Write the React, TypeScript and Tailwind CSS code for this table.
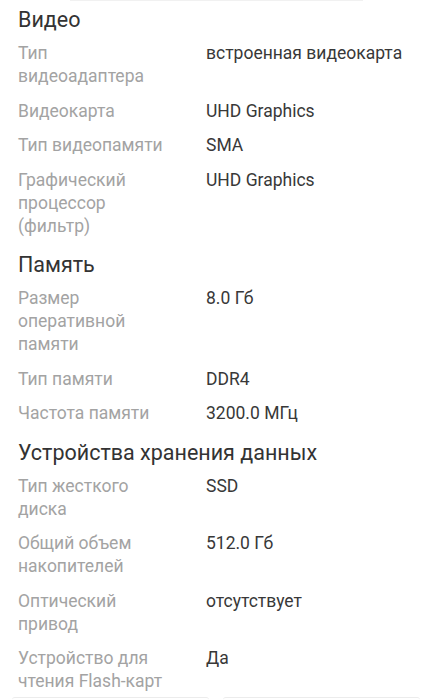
import React from "react";

type Row = { label: string; value: string };
type Section = { title: string; rows: Row[] };

const sections: Section[] = [
  {
    title: "Видео",
    rows: [
      { label: "Тип видеоадаптера", value: "встроенная видеокарта" },
      { label: "Видеокарта", value: "UHD Graphics" },
      { label: "Тип видеопамяти", value: "SMA" },
      { label: "Графический процессор (фильтр)", value: "UHD Graphics" },
    ],
  },
  {
    title: "Память",
    rows: [
      { label: "Размер оперативной памяти", value: "8.0 Гб" },
      { label: "Тип памяти", value: "DDR4" },
      { label: "Частота памяти", value: "3200.0 МГц" },
    ],
  },
  {
    title: "Устройства хранения данных",
    rows: [
      { label: "Тип жесткого диска", value: "SSD" },
      { label: "Общий объем накопителей", value: "512.0 Гб" },
      { label: "Оптический привод", value: "отсутствует" },
      { label: "Устройство для чтения Flash-карт", value: "Да" },
    ],
  },
];

export default function App() {
  return (
    <div
      className="w-[432px] h-[700px] overflow-hidden bg-white flex flex-col"
      style={{ fontFamily: "Roboto, 'Noto Sans', sans-serif" }}
    >
      <div className="h-px ml-[70px] w-[293px] bg-[#f1f1f1] shrink-0" />
      <div className="flex flex-col gap-[13.5px] px-[18px] pt-[5px]">
        {sections.map((s) => (
          <div key={s.title} className="flex flex-col">
            <h2 className="text-[21.5px] leading-[28px] text-[#333333] font-normal mb-[8px]">
              {s.title}
            </h2>
            <div className="grid grid-cols-[150px_1fr] gap-x-[38px] gap-y-[11.5px]">
              {s.rows.map((r) => (
                <React.Fragment key={r.label}>
                  <div className="text-[17.5px] leading-[23px] text-[#a3a3a3]">
                    {r.label}
                  </div>
                  <div className="text-[17.5px] leading-[23px] text-[#383838]">
                    {r.value}
                  </div>
                </React.Fragment>
              ))}
            </div>
          </div>
        ))}
      </div>
      <div className="flex gap-[14px] px-[12px] mt-[4px] shrink-0">
        <div className="flex-1 h-[20px] border-t border-[#ececec] rounded-t-[3px]" />
        <div className="flex-1 h-[20px] border-t border-[#ececec] rounded-t-[3px]" />
      </div>
    </div>
  );
}
